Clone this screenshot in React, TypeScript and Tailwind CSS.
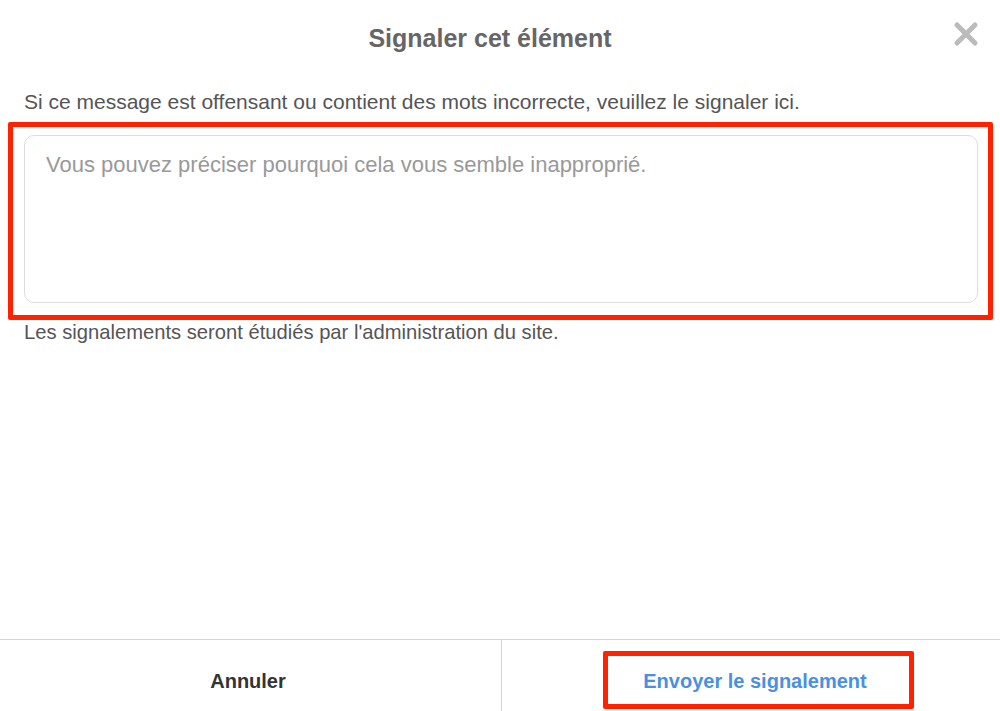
import { useState } from "react";

const font = { fontFamily: '"Liberation Sans", Arial, Helvetica, sans-serif' };

export default function App() {
  const [reason, setReason] = useState("");

  return (
    <div className="relative flex h-[711px] w-[1000px] flex-col bg-white" style={font}>
      <header className="relative flex h-[78px] items-center justify-center pr-[20px]">
        <h1 className="text-[25px] font-bold text-[#666666]">Signaler cet élément</h1>
        <button type="button" aria-label="Fermer" className="absolute right-[21px] top-[21px] text-[#bbbbbb]">
          <svg width="26" height="26" viewBox="0 0 26 26">
            <path d="M4 4 L22 22 M22 4 L4 22" stroke="currentColor" strokeWidth="5" strokeLinecap="round" />
          </svg>
        </button>
      </header>

      <div className="flex flex-1 flex-col pl-6 pr-[22px]">
        <p className="mt-[12px] text-[21px] leading-[24px] text-[#555555]">
          Si ce message est offensant ou contient des mots incorrecte, veuillez le signaler ici.
        </p>
        <div className="relative mt-[21px]">
          <textarea
            value={reason}
            onChange={(e) => setReason(e.target.value)}
            placeholder="Vous pouvez préciser pourquoi cela vous semble inapproprié."
            className="block h-[168px] w-full resize-none rounded-[10px] border border-[#dddddd] px-[21px] py-[16px] text-[22px] leading-[26px] text-[#333333] placeholder:text-[#999999] focus:outline-none"
          />
          <div className="pointer-events-none absolute -bottom-[17px] -left-[16px] -right-[15px] -top-[13px] rounded-[2px] border-[5px] border-[#ff2200]" />
        </div>
        <p className="mt-[17px] text-[20.2px] leading-[24px] text-[#555555]">
          Les signalements seront étudiés par l'administration du site.
        </p>
      </div>

      <footer className="grid h-[72px] grid-cols-[501px_1fr] border-t border-[#d4d4d4]">
        <button type="button" className="flex items-center justify-center pt-[10px] text-[20px] font-bold text-[#333333]">
          <span className="mr-[5px]">Annuler</span>
        </button>
        <button type="button" className="flex items-center justify-center border-l border-[#d4d4d4] pt-[10px] text-[20px] font-bold text-[#4a90e2]">
          <span className="relative ml-[8px] leading-[24px]">
            Envoyer le signalement
            <span className="pointer-events-none absolute -bottom-[16px] -left-[40px] -right-[47px] -top-[18px] rounded-[2px] border-[5px] border-[#ff2200]" />
          </span>
        </button>
      </footer>
    </div>
  );
}
